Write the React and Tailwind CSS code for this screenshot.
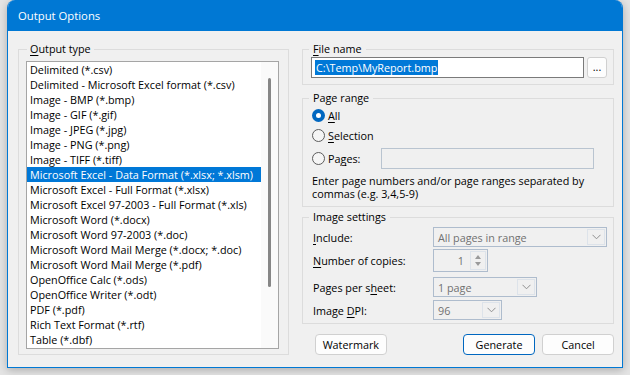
import React from "react";

const outputTypes = [
  "Delimited (*.csv)",
  "Delimited - Microsoft Excel format (*.csv)",
  "Image - BMP (*.bmp)",
  "Image - GIF (*.gif)",
  "Image - JPEG (*.jpg)",
  "Image - PNG (*.png)",
  "Image - TIFF (*.tiff)",
  "Microsoft Excel - Data Format (*.xlsx; *.xlsm)",
  "Microsoft Excel - Full Format (*.xlsx)",
  "Microsoft Excel 97-2003 - Full Format (*.xls)",
  "Microsoft Word (*.docx)",
  "Microsoft Word 97-2003 (*.doc)",
  "Microsoft Word Mail Merge (*.docx; *.doc)",
  "Microsoft Word Mail Merge (*.pdf)",
  "OpenOffice Calc (*.ods)",
  "OpenOffice Writer (*.odt)",
  "PDF (*.pdf)",
  "Rich Text Format (*.rtf)",
  "Table (*.dbf)",
];

const selected = 7;

function U({ children }) {
  return <span className="underline decoration-1 underline-offset-[2px]">{children}</span>;
}

function Chevron() {
  return (
    <svg width="9" height="6" viewBox="0 0 9 6" fill="none">
      <path d="M0.5 0.8 L4.5 4.8 L8.5 0.8" stroke="#8f8f8f" strokeWidth="1" />
    </svg>
  );
}

function Radio({ checked }) {
  if (checked) {
    return (
      <span className="w-[13px] h-[13px] rounded-full bg-[#0067c0] flex items-center justify-center shrink-0">
        <span className="w-[5px] h-[5px] rounded-full bg-white" />
      </span>
    );
  }
  return <span className="w-[13px] h-[13px] rounded-full border border-[#5c5c5c] bg-[#f5f5f5] shrink-0" />;
}

function Dropdown({ width, value }) {
  return (
    <div className={`${width} h-[20px] border border-[#aebccd] bg-[#f0f0f0] flex items-center justify-between pl-[4px] pr-[1px]`}>
      <span className="text-[#707070]">{value}</span>
      <span className="w-[18px] h-[16px] border border-[#dde3ea] flex items-center justify-center">
        <Chevron />
      </span>
    </div>
  );
}

export default function App() {
  return (
    <div
      className="w-[630px] h-[375px] bg-[#e4e4e4] text-[10.8px] leading-[15px] text-black overflow-hidden"
      style={{ fontFamily: '"Open Sans", "Liberation Sans", Arial, sans-serif' }}
    >
      <div className="ml-[7px] w-[616px] h-[368px] rounded-t-[8px] border-x border-b border-[#0078d4] bg-[#f0f0f0] shadow-[0_2px_8px_rgba(0,0,0,0.25)] overflow-hidden flex flex-col">
        <div className="h-[31px] bg-[#0078d4] flex items-center pl-[10px] text-white text-[11.3px] shrink-0">
          Output Options
        </div>

        <div className="flex pl-[10px] pt-[10px] gap-[13px]">
          {/* left */}
          <fieldset className="w-[271px] min-w-0 h-[314px] border border-[#dcdcdc] pl-[7px] pr-[9px] shrink-0">
            <legend className="px-[3px] ml-[1px] leading-[16px]">
              <U>O</U>utput type
            </legend>
            <div className="mt-[4px] h-[288px] border border-[#a5a5a5] bg-white flex overflow-hidden">
              <div className="flex-1 min-w-0 flex flex-col overflow-hidden">
                {outputTypes.map((t, i) => (
                  <div
                    key={t}
                    className={`h-[15px] leading-[15px] pl-[3px] whitespace-nowrap ${
                      i === selected ? "bg-[#0078d7] text-white" : ""
                    }`}
                  >
                    {t}
                  </div>
                ))}
              </div>
              <div className="w-[17px] bg-[#fafafa] flex justify-center pt-[16px] shrink-0">
                <div className="w-[3px] h-[209px] rounded-full bg-[#868686]" />
              </div>
            </div>
          </fieldset>

          {/* right */}
          <div className="w-[312px] flex flex-col shrink-0">
            <fieldset className="min-w-0 h-[44px] border border-[#dcdcdc] pl-[8px] pr-[6px]">
              <legend className="-ml-[2px] px-[4px] leading-[16px]">
                <U>F</U>ile name
              </legend>
              <div className="flex gap-[3px]">
                <div className="w-[274px] h-[21px] border border-[#7a7a7a] bg-white flex items-center pl-[3px]">
                  <span className="bg-[#0078d7] text-white leading-[15px] px-[1px]">C:\Temp\MyReport.bmp</span>
                </div>
                <div className="w-[20px] h-[21px] rounded-[3px] border border-[#d0d0d0] bg-[#fdfdfd] flex items-center justify-center leading-none">
                  ...
                </div>
              </div>
            </fieldset>

            <fieldset className="min-w-0 mt-[5px] h-[117px] border border-[#dcdcdc] pl-[9px] pr-[19px]">
              <legend className="-ml-[3px] px-[4px] leading-[16px]">Page range</legend>
              <div className="h-[18px] flex items-center gap-[3px]">
                <Radio checked />
                <span>
                  <U>A</U>ll
                </span>
              </div>
              <div className="mt-[2px] h-[18px] flex items-center gap-[3px]">
                <Radio />
                <span>
                  <U>S</U>election
                </span>
              </div>
              <div className="mt-[4px] h-[21px] flex items-center">
                <Radio />
                <span className="ml-[3px] w-[53px]">
                  Pa<U>g</U>es:
                </span>
                <div className="flex-1 h-[21px] border border-[#b9c4d0] bg-[#f0f0f0]" />
              </div>
              <p className="mt-[5px] leading-[13px]">
                Enter page numbers and/or page ranges separated by commas (e.g. 3,4,5-9)
              </p>
            </fieldset>

            <fieldset className="min-w-0 mt-[2px] h-[115px] border border-[#dcdcdc] pl-[10px] pr-[5px]">
              <legend className="-ml-[4px] px-[4px] leading-[16px]">Image settings</legend>
              <div className="mt-[2px] flex items-center">
                <span className="w-[120px]">
                  <U>I</U>nclude:
                </span>
                <Dropdown width="w-[174px]" value="All pages in range" />
              </div>
              <div className="mt-[2px] flex items-center">
                <span className="w-[120px]">
                  <U>N</U>umber of copies:
                </span>
                <div className="w-[55px] h-[23px] border border-[#aebccd] bg-[#f0f0f0] flex items-center p-[1px]">
                  <span className="flex-1 text-right pr-[6px] text-[#707070]">1</span>
                  <span className="w-[16px] h-full border border-[#dde3ea] flex flex-col items-center justify-center gap-[3px]">
                    <span className="w-0 h-0 border-x-[3px] border-x-transparent border-b-[4px] border-b-[#9a9a9a]" />
                    <span className="w-0 h-0 border-x-[3px] border-x-transparent border-t-[4px] border-t-[#9a9a9a]" />
                  </span>
                </div>
              </div>
              <div className="mt-[5px] flex items-center">
                <span className="w-[120px]">
                  Pages per s<U>h</U>eet:
                </span>
                <Dropdown width="w-[104px]" value="1 page" />
              </div>
              <div className="mt-[3px] flex items-center">
                <span className="w-[120px]">
                  Image <U>D</U>PI:
                </span>
                <Dropdown width="w-[69px]" value="96" />
              </div>
            </fieldset>

            <div className="mt-[10px] flex items-center">
              <button className="ml-[13px] w-[72px] h-[21px] rounded-[4px] border border-[#d0d0d0] bg-[#fdfdfd]">
                Watermark
              </button>
              <button className="ml-[76px] w-[73px] h-[21px] rounded-[4px] border border-[#0067c0] bg-[#fdfdfd]">
                Generate
              </button>
              <button className="ml-[7px] w-[72px] h-[21px] rounded-[4px] border border-[#d0d0d0] bg-[#fdfdfd]">
                Cancel
              </button>
            </div>
          </div>
        </div>
      </div>
    </div>
  );
}
